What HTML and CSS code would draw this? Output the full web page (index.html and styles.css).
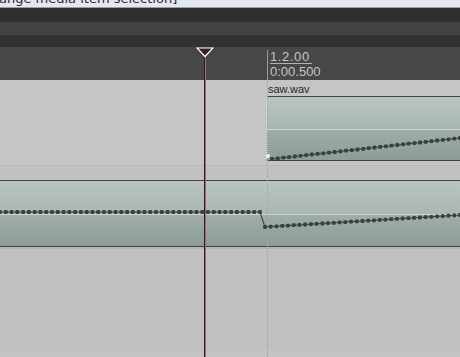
FILE: index.html
```html
<!DOCTYPE html>
<html lang="en">
<head>
    <meta charset="UTF-8">
    <title>Arrange</title>
    <link rel="stylesheet" href="styles.css">
</head>
<body>
    <div class="arrange">
        <div class="undo-bar"><span class="undo-text">ange media item selection]</span></div>
        <div class="band band-a"></div>
        <div class="band band-b"></div>
        <div class="band band-c"></div>

        <div class="ruler">
            <div class="ruler-label">
                <div class="ruler-beats">1.2.00</div>
                <div class="ruler-time">0:00.500</div>
            </div>
        </div>

        <div class="track track-one">
            <div class="item-name">saw.wav</div>
            <div class="item item-selected">
                <svg class="env" id="env1" width="193" height="63"></svg>
            </div>
        </div>

        <div class="track track-two">
            <div class="item item-full">
                <svg class="env" id="env2" width="460" height="65"></svg>
            </div>
        </div>

        <div class="marker-line"></div>
        <div class="playhead">
            <svg class="playhead-flag" width="18" height="11">
                <polygon points="1,1 17,1 9,9.5" fill="#3e1e1e" stroke="#ffffff" stroke-width="1.2"/>
            </svg>
        </div>
    </div>

    <script>
        // envelope segments: [x1, y1, x2, y2]
        const env1 = [[1, 59, 5, 62], [5, 62, 193, 41]];
        const env2 = [[0, 31, 260, 31], [260, 31, 265, 46], [265, 46, 460, 34]];

        function drawEnvelope(id, segments, firstColor) {
            const svg = document.getElementById(id);
            let out = '';
            let pts = segments.map(s => s[0] + ',' + s[1]).join(' ');
            const last = segments[segments.length - 1];
            pts += ' ' + last[2] + ',' + last[3];
            out += `<polyline points="${pts}" fill="none" stroke="#3c3f3f" stroke-width="1.1"/>`;

            segments.forEach((s, n) => {
                const len = s[2] - s[0];
                const steps = Math.max(1, Math.round(len / 5.75));
                for (let i = (n === 0 ? 0 : 1); i <= steps; i++) {
                    const x = s[0] + len * i / steps;
                    const y = s[1] + (s[3] - s[1]) * i / steps;
                    const fill = (n === 0 && i === 0 && firstColor) ? firstColor : '#3a3f3f';
                    out += `<rect x="${(x - 1.9).toFixed(1)}" y="${(y - 1.9).toFixed(1)}" width="3.8" height="3.8" rx="1" fill="${fill}"/>`;
                }
            });
            svg.innerHTML = out;
        }

        drawEnvelope('env1', env1, '#e8ecec');
        drawEnvelope('env2', env2);
    </script>
</body>
</html>
```

FILE: styles.css
```css
* {
    margin: 0;
    padding: 0;
    box-sizing: border-box;
}

body {
    background: #c3c3c3;
    font-family: "Liberation Sans", Arial, sans-serif;
    overflow: hidden;
}

.arrange {
    position: relative;
    width: 460px;
    height: 357px;
    overflow: hidden;
    background: #c3c3c3;
}

.undo-bar {
    height: 8px;
    background: #e4e6f2;
    border-bottom: 1px solid #9c9ca6;
    overflow: hidden;
}

.undo-text {
    display: block;
    margin-top: -8px;
    margin-left: -1px;
    font-family: "DejaVu Sans", sans-serif;
    font-size: 13px;
    line-height: 13px;
    color: #2a2a2a;
    white-space: nowrap;
}

.band {
    height: 13px;
}

.band-a {
    height: 14px;
    background: #2f2f2f;
}

.band-b {
    background: #444444;
}

.band-c {
    height: 12px;
    background: #323232;
}

.ruler {
    height: 33px;
    background: #474747;
    padding: 3px 0 0 270px;
}

.ruler-label {
    color: #c6c6c6;
    font-size: 13px;
    line-height: 13px;
    display: inline-block;
}

.ruler-beats {
    display: inline-block;
    padding-right: 2px;
    border-bottom: 1px solid #b0b0b0;
    letter-spacing: 0.6px;
}

.ruler-time {
    margin-top: 1px;
}

.track-one {
    height: 86px;
    background: #c4c5c4;
    padding-top: 3px;
    padding-left: 266px;
    border-bottom: 1px solid #b9b9b9;
}

.item-name {
    font-size: 11px;
    line-height: 13px;
    color: #262626;
    padding-left: 2px;
}

.item {
    display: flex;
    background: linear-gradient(#bac5c3, #a9b6b4 50%, #a0aeab 51%, #8e9c99);
    border-top: 1px solid #3f4343;
    border-bottom: 1px solid #3f4343;
    position: relative;
}

.item::after {
    content: "";
    position: absolute;
    left: 0;
    right: 0;
    top: 50%;
    height: 1px;
    background: #cdd6d4;
}

.item-selected {
    height: 65px;
    border-left: 1px dotted #f2f2f2;
    border-top-left-radius: 3px;
}

.item-full {
    height: 67px;
}

.env {
    display: block;
    position: relative;
    z-index: 1;
    overflow: visible;
}

.track-two {
    height: 184px;
    padding-top: 14px;
    background: #c1c1c1;
}

.track-two .item-full {
    box-shadow: 0 2px 0 #b4b4b4;
}

.marker-line {
    position: absolute;
    left: 267px;
    top: 50px;
    bottom: 0;
    border-left: 1px dotted #a3a3a3;
}

.marker-line::before {
    content: "";
    position: absolute;
    left: -1px;
    top: 0;
    height: 30px;
    border-left: 1px solid #9a9a9a;
}

.playhead {
    position: absolute;
    left: 204px;
    top: 48px;
    bottom: 0;
    width: 1px;
    background: #3a1616;
    box-shadow: 1px 0 0 #9c7070;
}

.playhead-flag {
    position: absolute;
    left: -8px;
    top: -1px;
    display: block;
}
```
